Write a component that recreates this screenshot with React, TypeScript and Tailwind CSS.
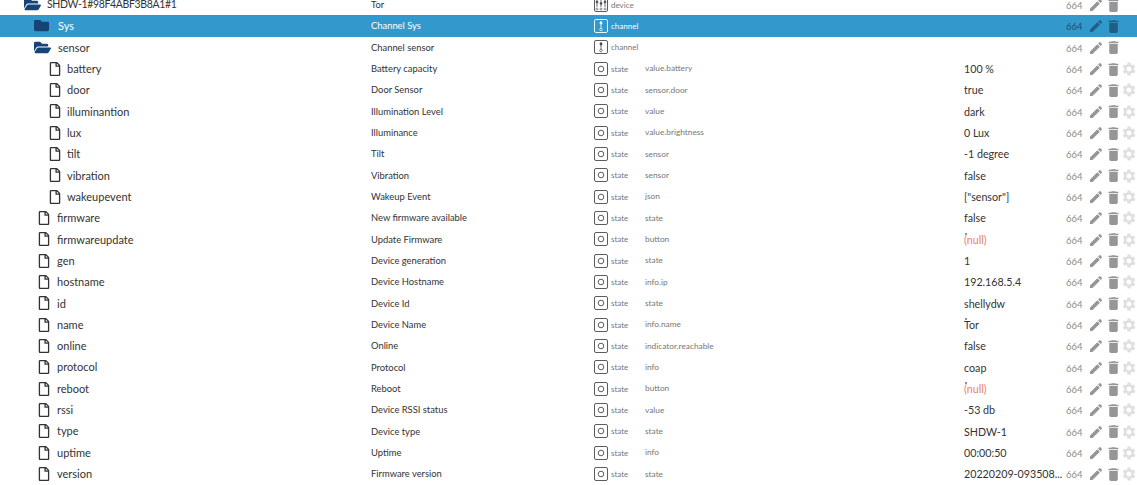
import { FaFolder, FaFolderOpen, FaRegFile } from "react-icons/fa";
import { MdDelete, MdEdit, MdSettings } from "react-icons/md";

type Row = {
  name: string;
  title: string;
  type: "device" | "channel" | "state";
  role?: string;
  value?: string;
  depth: 0 | 1 | 2 | 3;
  folder?: "open" | "closed";
  selected?: boolean;
  nullValue?: boolean;
  marked?: boolean;
};

const rows: Row[] = [
  { name: "SHDW-1#98F4ABF3B8A1#1", title: "Tor", type: "device", depth: 0, folder: "open" },
  { name: "Sys", title: "Channel Sys", type: "channel", depth: 1, folder: "closed", selected: true },
  { name: "sensor", title: "Channel sensor", type: "channel", depth: 1, folder: "open" },
  { name: "battery", title: "Battery capacity", type: "state", role: "value.battery", value: "100 %", depth: 3 },
  { name: "door", title: "Door Sensor", type: "state", role: "sensor.door", value: "true", depth: 3 },
  { name: "illuminantion", title: "Illumination Level", type: "state", role: "value", value: "dark", depth: 3 },
  { name: "lux", title: "Illuminance", type: "state", role: "value.brightness", value: "0 Lux", depth: 3 },
  { name: "tilt", title: "Tilt", type: "state", role: "sensor", value: "-1 degree", depth: 3 },
  { name: "vibration", title: "Vibration", type: "state", role: "sensor", value: "false", depth: 3 },
  { name: "wakeupevent", title: "Wakeup Event", type: "state", role: "json", value: '["sensor"]', depth: 3 },
  { name: "firmware", title: "New firmware available", type: "state", role: "state", value: "false", depth: 2 },
  { name: "firmwareupdate", title: "Update Firmware", type: "state", role: "button", value: "(null)", depth: 2, nullValue: true, marked: true },
  { name: "gen", title: "Device generation", type: "state", role: "state", value: "1", depth: 2 },
  { name: "hostname", title: "Device Hostname", type: "state", role: "info.ip", value: "192.168.5.4", depth: 2 },
  { name: "id", title: "Device Id", type: "state", role: "state", value: "shellydw", depth: 2 },
  { name: "name", title: "Device Name", type: "state", role: "info.name", value: "Tor", depth: 2, marked: true },
  { name: "online", title: "Online", type: "state", role: "indicator.reachable", value: "false", depth: 2 },
  { name: "protocol", title: "Protocol", type: "state", role: "info", value: "coap", depth: 2 },
  { name: "reboot", title: "Reboot", type: "state", role: "button", value: "(null)", depth: 2, nullValue: true, marked: true },
  { name: "rssi", title: "Device RSSI status", type: "state", role: "value", value: "-53 db", depth: 2 },
  { name: "type", title: "Device type", type: "state", role: "state", value: "SHDW-1", depth: 2 },
  { name: "uptime", title: "Uptime", type: "state", role: "info", value: "00:00:50", depth: 2 },
  { name: "version", title: "Firmware version", type: "state", role: "state", value: "20220209-093508...", depth: 2 },
];

const indent = { 0: "pl-[24px]", 1: "pl-[34px]", 2: "pl-[37px]", 3: "pl-[48px]" };
const labelGap = { 0: "w-[23px]", 1: "w-[24px]", 2: "w-[20px]", 3: "w-[19px]" };

function TypeIcon({ type, selected }: { type: Row["type"]; selected?: boolean }) {
  const color = selected ? "#ffffff" : "#4a4a4a";
  return (
    <svg width="14" height="14" viewBox="0 0 14 14" fill="none" stroke={color} className="shrink-0">
      <rect x="0.5" y="0.5" width="13" height="13" rx="1.5" strokeWidth="0.9" />
      {type === "state" && <circle cx="7" cy="7" r="2.8" strokeWidth="0.9" />}
      {type === "channel" && (
        <>
          <path d="M7 2v9" strokeWidth="0.8" />
          <circle cx="7" cy="4" r="1.2" fill={color} strokeWidth="0.5" />
          <circle cx="7" cy="10.5" r="1.3" fill={selected ? "#3399cc" : "#fff"} strokeWidth="0.7" />
        </>
      )}
      {type === "device" && (
        <>
          <path d="M3 2v7M7 2v7M11 2v7" strokeWidth="0.8" />
          <circle cx="3" cy="4" r="1.1" fill={color} strokeWidth="0.5" />
          <circle cx="7" cy="5.5" r="1.1" fill={color} strokeWidth="0.5" />
          <circle cx="11" cy="4" r="1.1" fill={color} strokeWidth="0.5" />
          <circle cx="3" cy="11" r="1" strokeWidth="0.6" />
          <circle cx="7" cy="11" r="1" strokeWidth="0.6" />
          <circle cx="11" cy="11" r="1" strokeWidth="0.6" />
        </>
      )}
    </svg>
  );
}

function TreeRow({ row }: { row: Row }) {
  const sel = row.selected;
  return (
    <div className={`flex h-[21.33px] items-center ${sel ? "bg-[#3399cc] text-white" : "text-[#333333]"}`}>
      <div className={`flex w-[371px] shrink-0 items-center ${indent[row.depth]}`}>
        <div className={`flex shrink-0 items-center ${labelGap[row.depth]}`}>
          {row.folder === "open" && <FaFolderOpen className="text-[17px] text-[#164477]" />}
          {row.folder === "closed" && <FaFolder className="text-[15px] text-[#164477]" />}
          {!row.folder && <FaRegFile className="text-[14px] text-[#333333]" />}
        </div>
        <span className={`pt-px ${row.depth === 0 ? "pt-[2px] text-[10.5px] tracking-[-0.35px]" : "text-[11px]"}`}>{row.name}</span>
      </div>
      <div className="w-[223px] shrink-0 truncate pt-px text-[9.4px]">{row.title}</div>
      <div className="flex w-[51px] shrink-0 items-center">
        <TypeIcon type={row.type} selected={sel} />
        <span className={`ml-[3px] text-[8px] ${sel ? "text-white" : "text-[#777777]"}`}>{row.type}</span>
      </div>
      <div className="w-[319px] shrink-0 truncate text-[8.3px] text-[#777777]">{row.role}</div>
      <div className={`relative w-[102px] shrink-0 pt-px text-[10.7px] ${row.nullValue ? "text-[#e9825f]" : ""}`}>
        {row.marked && <span className="absolute left-px top-[2px] size-[2px] bg-[#8a8fb0]" />}
        <span className="block truncate">{row.value}</span>
      </div>
      <div className={`w-[20px] shrink-0 pt-[3px] text-[9.5px] ${sel ? "text-[#1c4f70]" : "text-[#8c8c8c]"}`}>664</div>
      <div className={`mt-px flex items-center ${sel ? "text-[#1f5f85]" : "text-[#969696]"}`}>
        <MdEdit className="ml-[2px] text-[16px]" />
        <MdDelete className="ml-[1px] text-[17px]" />
        {row.type === "state" && <MdSettings className="-ml-px text-[16px] text-[#e0e0e0]" />}
      </div>
    </div>
  );
}

export default function App() {
  return (
    <div className="h-[485px] w-[1137px] overflow-hidden bg-white font-['Lato',sans-serif]">
      <div className="-mt-[6px]">
        {rows.map((row) => (
          <TreeRow key={row.name} row={row} />
        ))}
      </div>
    </div>
  );
}
